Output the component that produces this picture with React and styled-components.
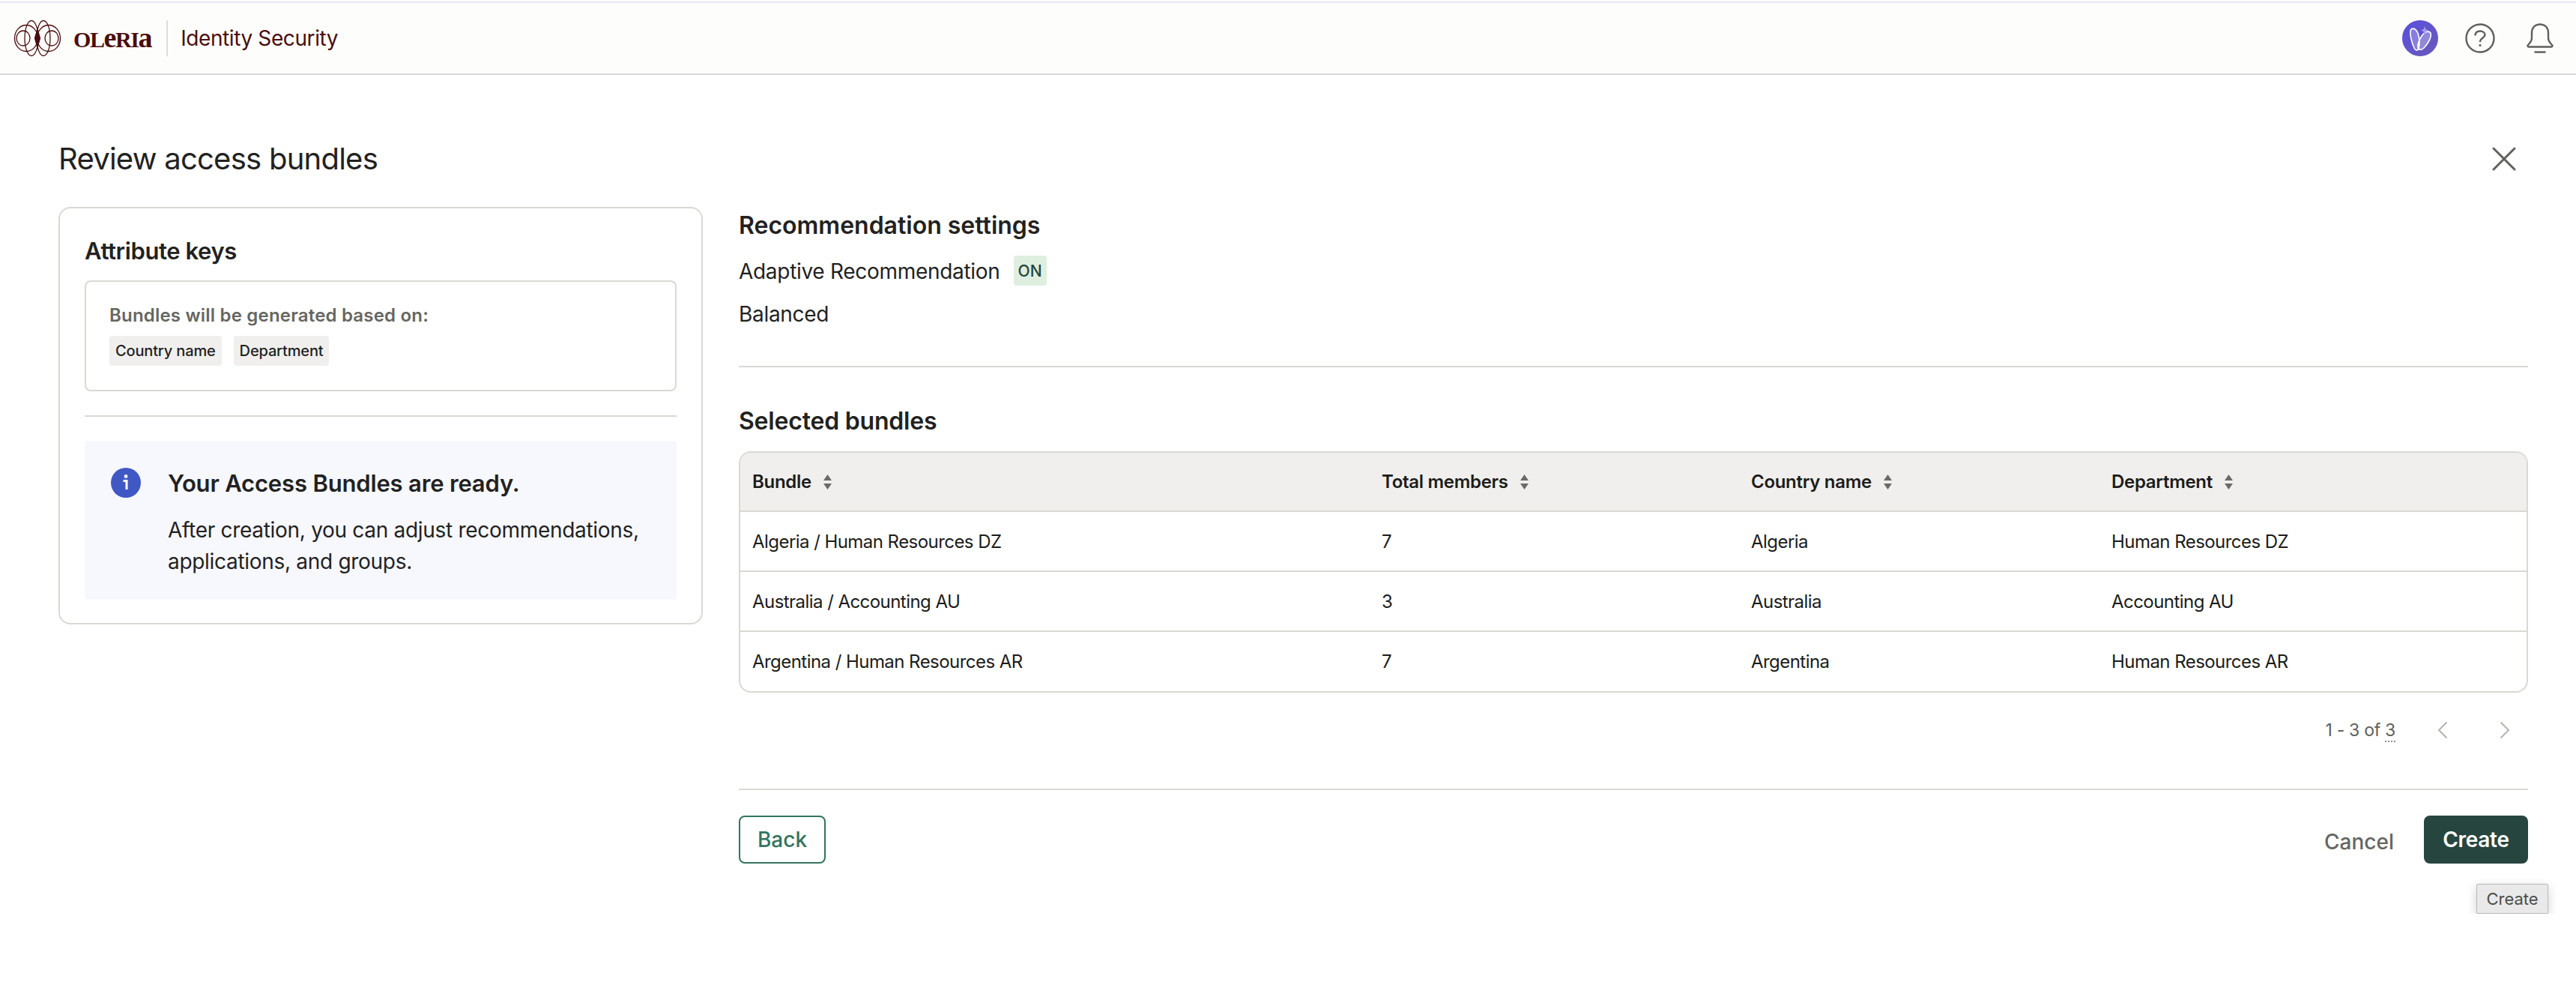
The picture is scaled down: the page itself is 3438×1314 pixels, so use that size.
import React from "react";
import styled, { createGlobalStyle } from "styled-components";

const rows = [
  { bundle: "Algeria / Human Resources DZ", total: 7, country: "Algeria", department: "Human Resources DZ" },
  { bundle: "Australia / Accounting AU", total: 3, country: "Australia", department: "Accounting AU" },
  { bundle: "Argentina / Human Resources AR", total: 7, country: "Argentina", department: "Human Resources AR" },
];

const columns = ["Bundle", "Total members", "Country name", "Department"];

const LogoMark = () => (
  <svg width="64" height="48" viewBox="0 0 64 48" fill="none" stroke="#4a0e0e" strokeWidth="1.3">
    <ellipse cx="17" cy="24" rx="15.5" ry="17.5" />
    <ellipse cx="47" cy="24" rx="15.5" ry="17.5" />
    <ellipse cx="13" cy="24" rx="9" ry="10" />
    <ellipse cx="51" cy="24" rx="9" ry="10" />
    <ellipse cx="24" cy="24" rx="9" ry="23.5" />
    <ellipse cx="40" cy="24" rx="9" ry="23.5" />
    <path d="M32 8C30 18 28 22 28 24c0 2 2 6 4 16 2-10 4-14 4-16 0-2-2-6-4-16z" fill="#4a0e0e" stroke="none" />
  </svg>
);

const AssistantIcon = () => (
  <svg width="48" height="48" viewBox="0 0 48 48">
    <defs>
      <linearGradient id="assistantBg" x1="0" y1="0" x2="1" y2="1">
        <stop offset="0" stopColor="#5a50e0" />
        <stop offset="1" stopColor="#6a58b8" />
      </linearGradient>
    </defs>
    <circle cx="24" cy="24" r="24" fill="url(#assistantBg)" />
    <path d="M12 12c5-3 9 3 10 9 1 5 2 9 0 16-1 4-4 4-6 0-3-7-7-20-4-25z" fill="#ffffff" fillOpacity=".25" stroke="#fff" strokeWidth="1.6" />
    <path d="M38 17c-3-4-9-1-12 4-3 5-6 10-5 15 1 4 5 4 8 1 4-4 11-14 9-20z" fill="#ffffff" fillOpacity=".3" stroke="#fff" strokeWidth="1.6" />
    <path d="M30 8l1.5 4 3.500 1.500-3.500 1.500-1.500 4-1.500-4-3.500-1.500 3.500-1.500z" fill="#a79be8" />
  </svg>
);

const HelpIcon = () => (
  <svg width="40" height="40" viewBox="0 0 40 40" fill="none" stroke="#5f5f5c" strokeWidth="2.4" strokeLinecap="round">
    <circle cx="20" cy="20" r="18.500" />
    <path d="M13.500 15.500c.5-3.500 3.200-5 6.500-5 3.500 0 6.500 2 6.500 5 0 4-6 4.500-6.500 8.500" />
    <circle cx="20" cy="29.500" r="1.600" fill="#5f5f5c" stroke="none" />
  </svg>
);

const BellIcon = () => (
  <svg width="36" height="40" viewBox="0 0 36 40" fill="none" stroke="#5f5f5c" strokeWidth="2.400" strokeLinecap="round" strokeLinejoin="round">
    <path d="M18 1.500c-7 0-11 5-11 11v7c0 4-2.500 7-5 9.500-1 1-.5 2.500 1 2.500h30c1.500 0 2-1.500 1-2.500-2.500-2.500-5-5.500-5-9.500v-7c0-6-4-11-11-11z" />
    <path d="M11.500 38.500h13" />
  </svg>
);

const CloseIcon = () => (
  <svg width="32" height="32" viewBox="0 0 32 32" fill="none" stroke="#5f5f5c" strokeWidth="3" strokeLinecap="round">
    <path d="M2 2l28 28M30 2L2 30" />
  </svg>
);

const InfoIcon = () => (
  <svg width="40" height="40" viewBox="0 0 40 40">
    <circle cx="20" cy="20" r="20" fill="#4058c4" />
    <circle cx="20" cy="11.500" r="2.400" fill="#fff" />
    <path d="M16.500 17.500h4.500v11.500" fill="none" stroke="#fff" strokeWidth="3" />
  </svg>
);

const SortIcon = () => (
  <svg width="13" height="20" viewBox="0 0 13 20" fill="#6a6a66">
    <path d="M6.500 0l5.500 8H1zM6.500 20L1 12h11z" />
  </svg>
);

const Chevron = ({ right }) => (
  <svg width="14" height="24" viewBox="0 0 14 24" fill="none" stroke="#b4b4b0" strokeWidth="2" strokeLinecap="round">
    <path d={right ? "M2 2l10 10L2 22" : "M12 2L2 12l10 10"} />
  </svg>
);

const App = () => (
  <>
    <GlobalStyle />
    <Header>
      <Brand>
        <LogoMark />
        <Wordmark>
          OL<Unicase>e</Unicase>RI<Unicase>a</Unicase>
        </Wordmark>
        <BrandDivider />
        <Product>Identity Security</Product>
      </Brand>
      <HeaderIcons>
        <AssistantIcon />
        <HelpIcon />
        <BellSlot>
          <BellIcon />
        </BellSlot>
      </HeaderIcons>
    </Header>
    <Main>
      <TitleRow>
        <Title>Review access bundles</Title>
        <CloseButton>
          <CloseIcon />
        </CloseButton>
      </TitleRow>
      <Columns>
        <Card>
          <CardTitle>Attribute keys</CardTitle>
          <KeysBox>
            <KeysLabel>Bundles will be generated based on:</KeysLabel>
            <Chips>
              <Chip>Country name</Chip>
              <Chip>Department</Chip>
            </Chips>
          </KeysBox>
          <CardDivider />
          <Notice>
            <InfoIcon />
            <NoticeText>
              <NoticeTitle>Your Access Bundles are ready.</NoticeTitle>
              <NoticeBody>
                After creation, you can adjust recommendations, applications, and groups.
              </NoticeBody>
            </NoticeText>
          </Notice>
        </Card>
        <Details>
          <SectionTitle>Recommendation settings</SectionTitle>
          <SettingRow>
            <SettingText>Adaptive Recommendation</SettingText>
            <OnBadge>ON</OnBadge>
          </SettingRow>
          <Balanced>Balanced</Balanced>
          <Rule $gap={49} />
          <SelectedTitle>Selected bundles</SelectedTitle>
          <TableWrap>
            <Table>
              <colgroup>
                <col width="840" />
                <col width="493" />
                <col width="481" />
                <col />
              </colgroup>
              <thead>
                <tr>
                  {columns.map(name => (
                    <HeadCell key={name}>
                      <HeadInner>
                        {name}
                        <SortIcon />
                      </HeadInner>
                    </HeadCell>
                  ))}
                </tr>
              </thead>
              <tbody>
                {rows.map(row => (
                  <tr key={row.bundle}>
                    <Cell>{row.bundle}</Cell>
                    <Cell>{row.total}</Cell>
                    <Cell>{row.country}</Cell>
                    <Cell>{row.department}</Cell>
                  </tr>
                ))}
              </tbody>
            </Table>
          </TableWrap>
          <Pagination>
            <PageCount>
              1 - 3 of <PageTotal>3</PageTotal>
            </PageCount>
            <PageButtons>
              <Chevron />
              <Chevron right />
            </PageButtons>
          </Pagination>
          <Rule $gap={54} />
          <Actions>
            <BackButton>Back</BackButton>
            <RightActions>
              <CancelButton>Cancel</CancelButton>
              <CreateButton>Create</CreateButton>
            </RightActions>
          </Actions>
          <HintRow>
            <Hint>Create</Hint>
          </HintRow>
        </Details>
      </Columns>
    </Main>
  </>
);

export default App;

const GlobalStyle = createGlobalStyle`
  html, body {
    margin: 0;
    padding: 0;
    background: #ffffff;
  }
  body {
    font-family: Inter, "Liberation Sans", sans-serif;
    color: #22221f;
  }
  * {
    box-sizing: border-box;
  }
`;

const Header = styled.header`
  height: 98px;
  margin-top: 2px;
  border-top: 2px solid #e6e6f3;
  border-bottom: 2px solid #d9d9d6;
  background: #fdfdfb;
  display: flex;
  align-items: center;
  justify-content: space-between;
  padding: 0 30px 0 18px;
`;

const Brand = styled.div`
  display: flex;
  align-items: center;
`;

const Wordmark = styled.span`
  margin-left: 16px;
  font-family: "Liberation Serif", serif;
  font-weight: 700;
  font-size: 30px;
  line-height: 48px;
  color: #4a0e0e;
  letter-spacing: -1.4px;
`;

const Unicase = styled.span`
  font-size: 38px;
`;

const BrandDivider = styled.span`
  width: 2px;
  height: 48px;
  margin: 0 17px 0 20px;
  background: #dcdcd8;
`;

const Product = styled.span`
  font-size: 28px;
  line-height: 48px;
  color: #4a0e0e;
  letter-spacing: -0.4px;
`;

const HeaderIcons = styled.div`
  display: flex;
  align-items: center;
  gap: 36px;
`;

const BellSlot = styled.span`
  display: flex;
  margin-left: 6px;
`;

const Main = styled.main`
  padding: 0 64px 0 78px;
`;

const TitleRow = styled.div`
  display: flex;
  align-items: center;
  justify-content: space-between;
  height: 64px;
  margin-top: 80px;
  padding-right: 16px;
`;

const Title = styled.h1`
  margin: 0;
  font-size: 40px;
  font-weight: 400;
  line-height: 56px;
  color: #22221f;
  letter-spacing: -0.75px;
`;

const CloseButton = styled.span`
  display: flex;
`;

const Columns = styled.div`
  display: flex;
  align-items: flex-start;
  gap: 48px;
  margin-top: 32px;
`;

const Card = styled.section`
  width: 860px;
  flex: none;
  padding: 37px 33px 31px;
  border: 2px solid #d9d9d3;
  border-radius: 16px;
`;

const CardTitle = styled.h2`
  margin: 0 0 19px;
  font-size: 31px;
  font-weight: 600;
  line-height: 40px;
  letter-spacing: -0.4px;
`;

const KeysBox = styled.div`
  padding: 30px 31px 32px;
  border: 2px solid #d9d9d3;
  border-radius: 8px;
`;

const KeysLabel = styled.div`
  font-size: 24px;
  font-weight: 600;
  line-height: 30px;
  color: #666661;
  letter-spacing: 0.2px;
`;

const Chips = styled.div`
  display: flex;
  gap: 16px;
  margin-top: 12px;
`;

const Chip = styled.span`
  height: 40px;
  padding: 0 8px;
  display: flex;
  align-items: center;
  border-radius: 4px;
  background: #f0efed;
  font-size: 20px;
  font-weight: 500;
  color: #22221f;
  letter-spacing: -0.15px;
`;

const CardDivider = styled.hr`
  margin: 32px 0;
  height: 2px;
  border: 0;
  background: #d9d9d3;
`;

const Notice = styled.div`
  display: flex;
  align-items: flex-start;
  gap: 36px;
  padding: 36px 35px 30px;
  border-radius: 4px;
  background: #f7f8fe;
`;

const NoticeText = styled.div`
  flex: 1;
  padding-top: 1px;
`;

const NoticeTitle = styled.div`
  font-size: 31px;
  font-weight: 600;
  line-height: 40px;
  letter-spacing: -0.17px;
`;

const NoticeBody = styled.p`
  margin: 21px 0 0;
  font-size: 28px;
  line-height: 42px;
  letter-spacing: -0.3px;
`;

const Details = styled.section`
  flex: 1;
  min-width: 0;
`;

const SectionTitle = styled.h2`
  margin: 5px 0 0;
  font-size: 32px;
  font-weight: 600;
  line-height: 40px;
  letter-spacing: 0;
`;

const SettingRow = styled.div`
  display: flex;
  align-items: flex-start;
  gap: 18px;
  margin-top: 20px;
`;

const SettingText = styled.span`
  padding-top: 1px;
  font-size: 28px;
  line-height: 40px;
  letter-spacing: -0.3px;
`;

const OnBadge = styled.span`
  width: 44px;
  height: 40px;
  display: flex;
  align-items: center;
  justify-content: center;
  border-radius: 4px;
  background: #deefdf;
  font-size: 21px;
  font-weight: 500;
  color: #26453e;
`;

const Balanced = styled.div`
  margin-top: 17px;
  font-size: 28px;
  line-height: 40px;
  letter-spacing: -0.3px;
`;

const Rule = styled.hr`
  margin: ${props => props.$gap}px 0 0;
  height: 2px;
  border: 0;
  background: #d9d9d3;
`;

const SelectedTitle = styled.h2`
  margin: 52px 0 20px;
  font-size: 32px;
  font-weight: 600;
  line-height: 40px;
  letter-spacing: -0.2px;
`;

const TableWrap = styled.div`
  border: 2px solid #d9d9d3;
  border-radius: 16px;
  overflow: hidden;
`;

const Table = styled.table`
  width: 100%;
  table-layout: fixed;
  border-collapse: collapse;
`;

const HeadCell = styled.th`
  height: 78px;
  padding: 0 16px;
  text-align: left;
  background: #f0efed;
  border-bottom: 2px solid #d9d9d3;
  font-size: 24px;
  font-weight: 600;
  color: #1c1c1a;
`;

const HeadInner = styled.span`
  display: inline-flex;
  align-items: center;
  gap: 15px;
  letter-spacing: -0.3px;
`;

const Cell = styled.td`
  height: 80px;
  padding: 0 16px;
  font-size: 24px;
  color: #1c1c1a;
  letter-spacing: -0.55px;
  tr:not(:last-child) > & {
    border-bottom: 2px solid #d9d9d3;
  }
`;

const Pagination = styled.div`
  display: flex;
  align-items: center;
  justify-content: flex-end;
  gap: 56px;
  height: 48px;
  margin-top: 26px;
  padding-right: 24px;
`;

const PageCount = styled.span`
  font-size: 23px;
  color: #5f5f5c;
  letter-spacing: -0.3px;
`;

const PageTotal = styled.span`
  border-bottom: 2px dotted #8c8c88;
`;

const PageButtons = styled.div`
  display: flex;
  gap: 69px;
`;

const Actions = styled.div`
  display: flex;
  align-items: center;
  justify-content: space-between;
  margin-top: 34px;
`;

const BackButton = styled.button`
  width: 116px;
  height: 64px;
  padding: 0;
  border: 2px solid #33745f;
  border-radius: 8px;
  background: #ffffff;
  font: 500 28px Inter, sans-serif;
  color: #33745f;
`;

const RightActions = styled.div`
  display: flex;
  align-items: center;
  gap: 40px;
`;

const CancelButton = styled.button`
  padding: 6px 0 0;
  border: 0;
  background: none;
  font: 500 28px Inter, sans-serif;
  color: #666661;
`;

const CreateButton = styled.button`
  width: 139px;
  height: 64px;
  padding: 0;
  border: 0;
  border-radius: 8px;
  background: #26453e;
  font: 600 28px Inter, sans-serif;
  letter-spacing: -0.3px;
  color: #ffffff;
`;

const HintRow = styled.div`
  display: flex;
  justify-content: flex-end;
  margin: 27px -27px 0 0;
`;

const Hint = styled.span`
  width: 96px;
  height: 40px;
  display: flex;
  align-items: center;
  justify-content: center;
  border: 1px solid #b9b9b9;
  border-radius: 2px;
  background: #e8e9e8;
  box-shadow: 0 4px 14px rgba(0, 0, 0, 0.18);
  font: 400 22px Inter, sans-serif;
  color: #4d4d4d;
`;
